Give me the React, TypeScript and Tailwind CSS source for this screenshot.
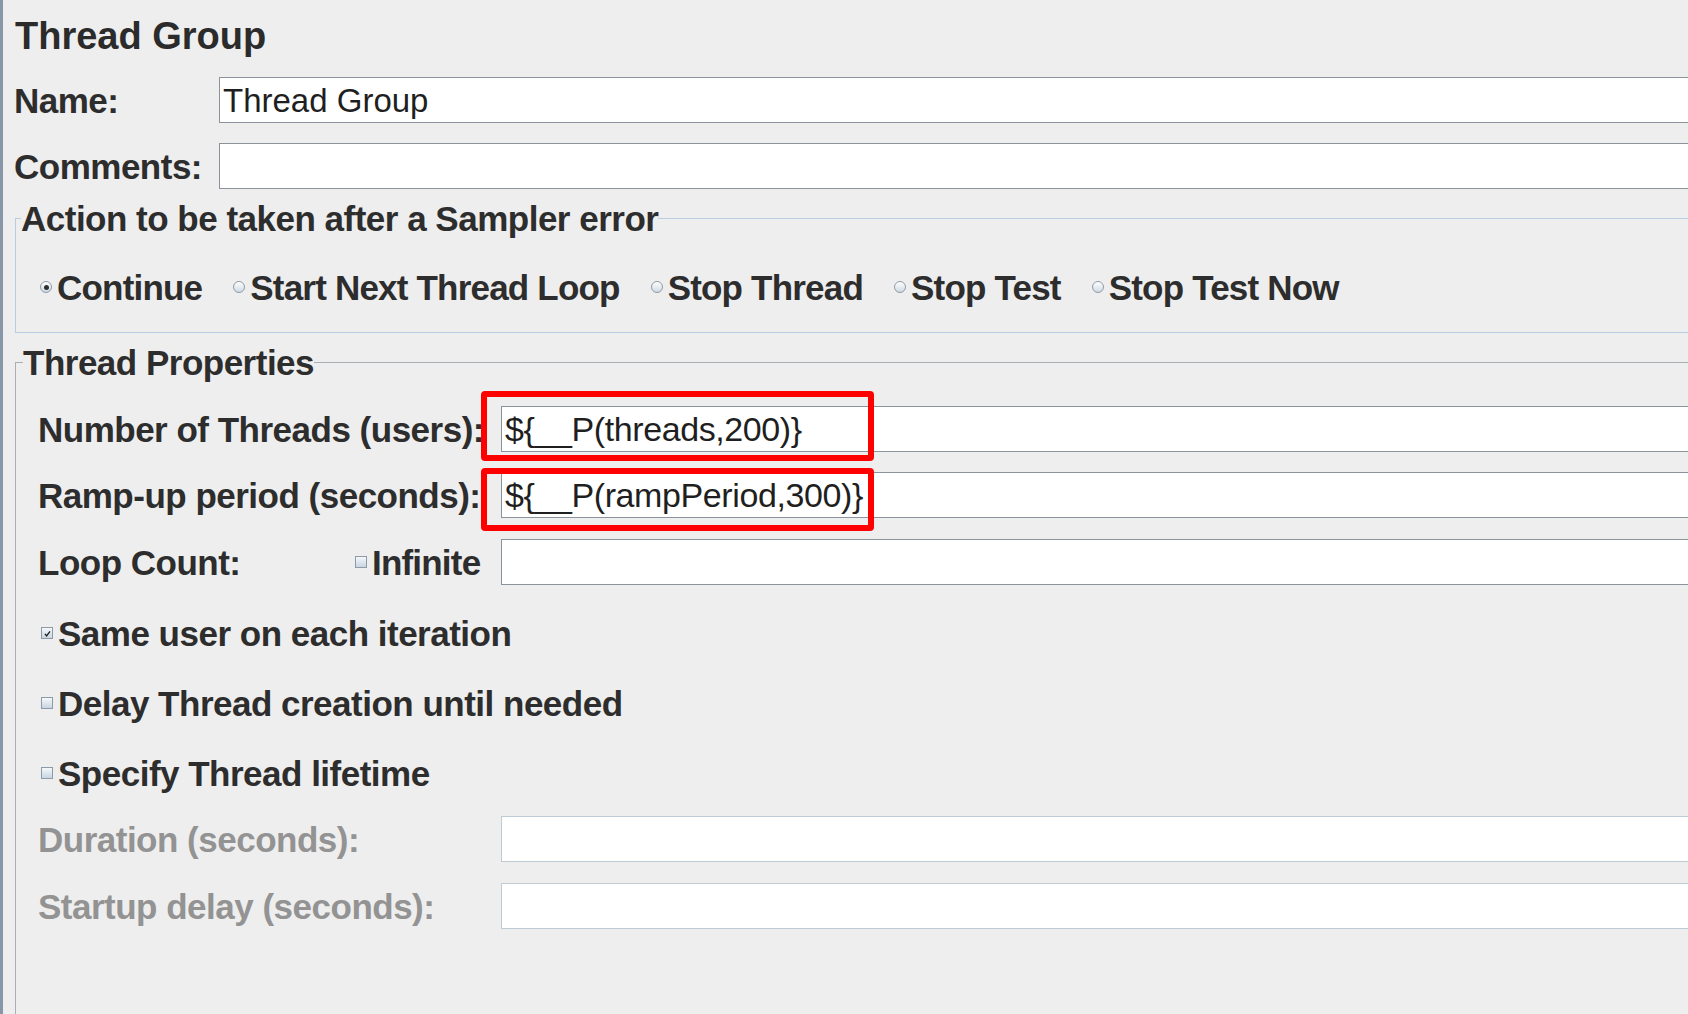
import React from "react";

const label = "text-[35px] font-bold leading-none tracking-[-0.5px] text-[#2d2d2d] whitespace-nowrap";
const radioLabel = "text-[35px] font-bold leading-none tracking-[-0.8px] text-[#2d2d2d] whitespace-nowrap";
const grayLabel = "text-[35px] font-bold leading-none tracking-[-0.5px] text-[#939393] whitespace-nowrap";

function Radio({ checked }: { checked?: boolean }) {
  return (
    <span className="flex h-[12px] w-[12px] shrink-0 items-center justify-center rounded-full border border-[#8e9ba6] bg-linear-to-b from-white to-[#cfdae4]">
      {checked && <span className="h-[5px] w-[5px] rounded-full bg-[#2f2f2f]" />}
    </span>
  );
}

function Checkbox({ checked }: { checked?: boolean }) {
  return (
    <span className="flex h-[12px] w-[12px] shrink-0 items-center justify-center border border-[#8e9ba6] bg-linear-to-b from-[#f5f8fb] to-[#c8d5e1]">
      {checked && (
        <svg viewBox="0 0 10 10" className="h-[9px] w-[9px]">
          <path d="M2.2 5.4 L4 7.6 L7.8 2.6" stroke="#1f1f1f" strokeWidth="1.5" fill="none" />
        </svg>
      )}
    </span>
  );
}

function Field({ value, disabled, mono }: { value?: string; disabled?: boolean; mono?: boolean }) {
  return (
    <div
      className={
        disabled
          ? "flex h-[46px] flex-1 items-center border border-r-0 border-[#bccbd4] bg-white pl-[3px]"
          : "flex h-[46px] flex-1 items-center border border-r-0 border-[#8b949c] bg-white pl-[3px]"
      }
    >
      {value && (
        <span
          className={
            mono
              ? "text-[34px] leading-none tracking-[-0.4px] whitespace-nowrap text-[#1f1f1f]"
              : "text-[33px] leading-none whitespace-nowrap text-[#1f1f1f]"
          }
        >
          {value}
        </span>
      )}
    </div>
  );
}

const actions = ["Continue", "Start Next Thread Loop", "Stop Thread", "Stop Test", "Stop Test Now"];

export default function App() {
  return (
    <div className="relative h-[1014px] w-[1688px] overflow-hidden border-l-[3px] border-[#8797a7] bg-[#eeeeee] font-['Liberation_Sans',Arial,sans-serif]">
      <div className="flex h-[72px] items-center pl-[12px] text-[38px] font-bold leading-none text-[#2b2b2b]">
        Thread Group
      </div>

      <div className="mt-[5px] flex h-[46px] items-center pl-[11px]">
        <div className={`w-[205px] ${label}`}>Name:</div>
        <Field value="Thread Group" />
      </div>
      <div className="mt-[20px] flex h-[46px] items-center pl-[11px]">
        <div className={`w-[205px] ${label}`}>Comments:</div>
        <Field />
      </div>

      <fieldset className="mt-[12px] ml-[12px] border border-r-0 border-[#b9cde2]">
        <legend className={`ml-[5px] ${label}`}>Action to be taken after a Sampler error</legend>
        <div className="mt-[31px] mb-[25px] flex h-[40px] items-center gap-[31px] pl-[24px]">
          {actions.map((a, i) => (
            <div key={a} className="flex items-center gap-[5px]">
              <Radio checked={i === 0} />
              <span className={radioLabel}>{a}</span>
            </div>
          ))}
        </div>
      </fieldset>

      <fieldset className="mt-[12px] ml-[12px] h-[700px] border border-r-0 border-b-0 border-[#a9aeb3]">
        <legend className={`ml-[7px] ${label}`}>Thread Properties</legend>

        <div className="pl-[22px]">
          <div className="mt-[26px] flex h-[46px] items-center">
            <div className={`w-[463px] ${label}`}>Number of Threads (users):</div>
            <Field value="${__P(threads,200)}" mono />
          </div>
          <div className="mt-[20px] flex h-[46px] items-center">
            <div className={`w-[463px] ${label}`}>Ramp-up period (seconds):</div>
            <Field value="${__P(rampPeriod,300)}" mono />
          </div>
          <div className="mt-[21px] flex h-[46px] items-center">
            <div className="flex w-[463px] items-center">
              <div className={`w-[317px] ${label}`}>Loop Count:</div>
              <Checkbox />
              <span className={`ml-[5px] ${radioLabel}`}>Infinite</span>
            </div>
            <Field />
          </div>

          <div className="mt-[28px] flex flex-col gap-[30px] pl-[3px]">
            <div className="flex h-[40px] items-center gap-[5px]">
              <Checkbox checked />
              <span className={label}>Same user on each iteration</span>
            </div>
            <div className="flex h-[40px] items-center gap-[5px]">
              <Checkbox />
              <span className={label}>Delay Thread creation until needed</span>
            </div>
            <div className="flex h-[40px] items-center gap-[5px]">
              <Checkbox />
              <span className={label}>Specify Thread lifetime</span>
            </div>
          </div>

          <div className="mt-[23px] flex h-[46px] items-center">
            <div className={`w-[463px] ${grayLabel}`}>Duration (seconds):</div>
            <Field disabled />
          </div>
          <div className="mt-[21px] flex h-[46px] items-center">
            <div className={`w-[463px] ${grayLabel}`}>Startup delay (seconds):</div>
            <Field disabled />
          </div>
        </div>
      </fieldset>

      {/* red annotation boxes */}
      <div className="absolute top-[391px] left-[478px] h-[70px] w-[393px] rounded-[4px] border-[6px] border-[#ff0000]" />
      <div className="absolute top-[468px] left-[478px] h-[63px] w-[393px] rounded-[4px] border-[6px] border-[#ff0000]" />
    </div>
  );
}
